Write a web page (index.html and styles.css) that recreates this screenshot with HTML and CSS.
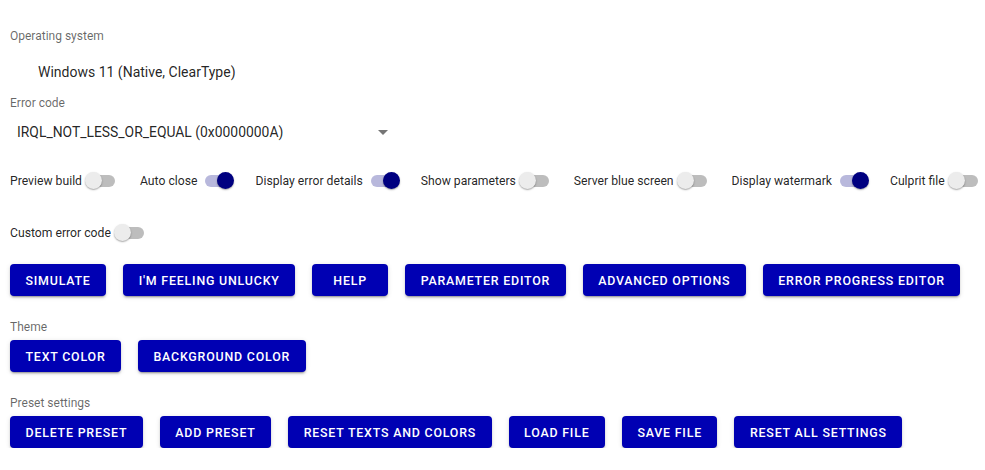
FILE: index.html
```html
<!DOCTYPE html>
<html>
<head>
<meta charset="utf-8">
<link rel="stylesheet" href="styles.css">
</head>
<body>
<div class="page">
  <div class="label">Operating system</div>
  <div class="os-value">Windows 11 (Native, ClearType)</div>

  <div class="label label-error">Error code</div>
  <div class="select">
    <span>IRQL_NOT_LESS_OR_EQUAL (0x0000000A)</span>
    <svg class="arrow" width="10" height="5" viewBox="0 0 10 5"><path d="M0 0L10 0L5 5Z" fill="#757575"/></svg>
  </div>

  <div class="switch-row first-row">
    <span class="sw-label">Preview build</span><span class="switch"><span class="track"></span><span class="thumb"></span></span>
    <span class="sw-label">Auto close</span><span class="switch on"><span class="track"></span><span class="thumb"></span></span>
    <span class="sw-label">Display error details</span><span class="switch on"><span class="track"></span><span class="thumb"></span></span>
    <span class="sw-label">Show parameters</span><span class="switch"><span class="track"></span><span class="thumb"></span></span>
    <span class="sw-label">Server blue screen</span><span class="switch"><span class="track"></span><span class="thumb"></span></span>
    <span class="sw-label">Display watermark</span><span class="switch on"><span class="track"></span><span class="thumb"></span></span>
    <span class="sw-label">Culprit file</span><span class="switch"><span class="track"></span><span class="thumb"></span></span>
  </div>

  <div class="switch-row second-row">
    <span class="sw-label">Custom error code</span><span class="switch"><span class="track"></span><span class="thumb"></span></span>
  </div>

  <div class="buttons main-buttons">
    <button class="btn">Simulate</button>
    <button class="btn">I'm feeling unlucky</button>
    <button class="btn">Help</button>
    <button class="btn">Parameter editor</button>
    <button class="btn">Advanced options</button>
    <button class="btn">Error progress editor</button>
  </div>

  <div class="label section-label">Theme</div>
  <div class="buttons sub-buttons">
    <button class="btn">Text color</button>
    <button class="btn">Background color</button>
  </div>

  <div class="label section-label">Preset settings</div>
  <div class="buttons sub-buttons">
    <button class="btn">Delete preset</button>
    <button class="btn">Add preset</button>
    <button class="btn">Reset texts and colors</button>
    <button class="btn">Load file</button>
    <button class="btn">Save file</button>
    <button class="btn">Reset all settings</button>
  </div>
</div>
</body>
</html>
```

FILE: styles.css
```css
html, body {
  margin: 0;
  padding: 0;
  background: #ffffff;
}

body {
  font-family: Roboto, "Liberation Sans", sans-serif;
  color: rgba(0, 0, 0, 0.87);
}

.page {
  padding: 28px 10px 0 10px;
  display: flex;
  flex-direction: column;
  align-items: flex-start;
}

.label {
  font-size: 12px;
  line-height: 16px;
  color: rgba(0, 0, 0, 0.6);
}

.os-value {
  margin-top: 18px;
  padding-left: 28px;
  font-size: 14px;
  line-height: 20px;
}

.label-error {
  margin-top: 13px;
}

.select {
  margin-top: 11px;
  width: 385px;
  box-sizing: border-box;
  padding-left: 7px;
  padding-right: 7px;
  display: flex;
  align-items: center;
  justify-content: space-between;
  font-size: 13.9px;
  line-height: 20px;
}

.arrow {
  display: block;
}

.switch-row {
  display: flex;
  align-items: center;
  height: 24px;
  font-size: 12.2px;
}

.first-row {
  margin-top: 27px;
}

.second-row {
  margin-top: 28px;
}

.sw-label {
  white-space: nowrap;
}

.switch {
  position: relative;
  width: 36px;
  height: 24px;
  margin-left: 2px;
  margin-right: 20px;
  flex: none;
}

.switch-row .switch:last-child {
  margin-right: 0;
}

.track {
  position: absolute;
  left: 6px;
  top: 6px;
  width: 25px;
  height: 12px;
  border-radius: 6px;
  background: #bdbdbd;
}

.thumb {
  position: absolute;
  left: 1px;
  top: 3px;
  width: 17px;
  height: 17px;
  border-radius: 50%;
  background: #ececec;
  box-shadow: 0 1px 2px rgba(0, 0, 0, 0.25), 0 1px 1px rgba(0, 0, 0, 0.12);
}

.switch.on .track {
  background: #b8b8dc;
}

.switch.on .thumb {
  left: 18px;
  background: #000080;
}

.buttons {
  display: flex;
  gap: 17px;
}

.main-buttons {
  margin-top: 19px;
}

.sub-buttons {
  margin-top: 5px;
}

.section-label {
  margin-top: 23px;
}

.btn {
  height: 32px;
  min-width: 76px;
  padding: 0 15.5px;
  border: none;
  border-radius: 4px;
  background: #0000b3;
  color: #ffffff;
  font-family: Roboto, "Liberation Sans", sans-serif;
  font-size: 12.4px;
  font-weight: 500;
  letter-spacing: 0.8px;
  text-transform: uppercase;
  box-shadow: 0 3px 1px -2px rgba(0, 0, 0, 0.2), 0 2px 2px 0 rgba(0, 0, 0, 0.14), 0 1px 5px 0 rgba(0, 0, 0, 0.12);
  cursor: pointer;
  white-space: nowrap;
}
```
